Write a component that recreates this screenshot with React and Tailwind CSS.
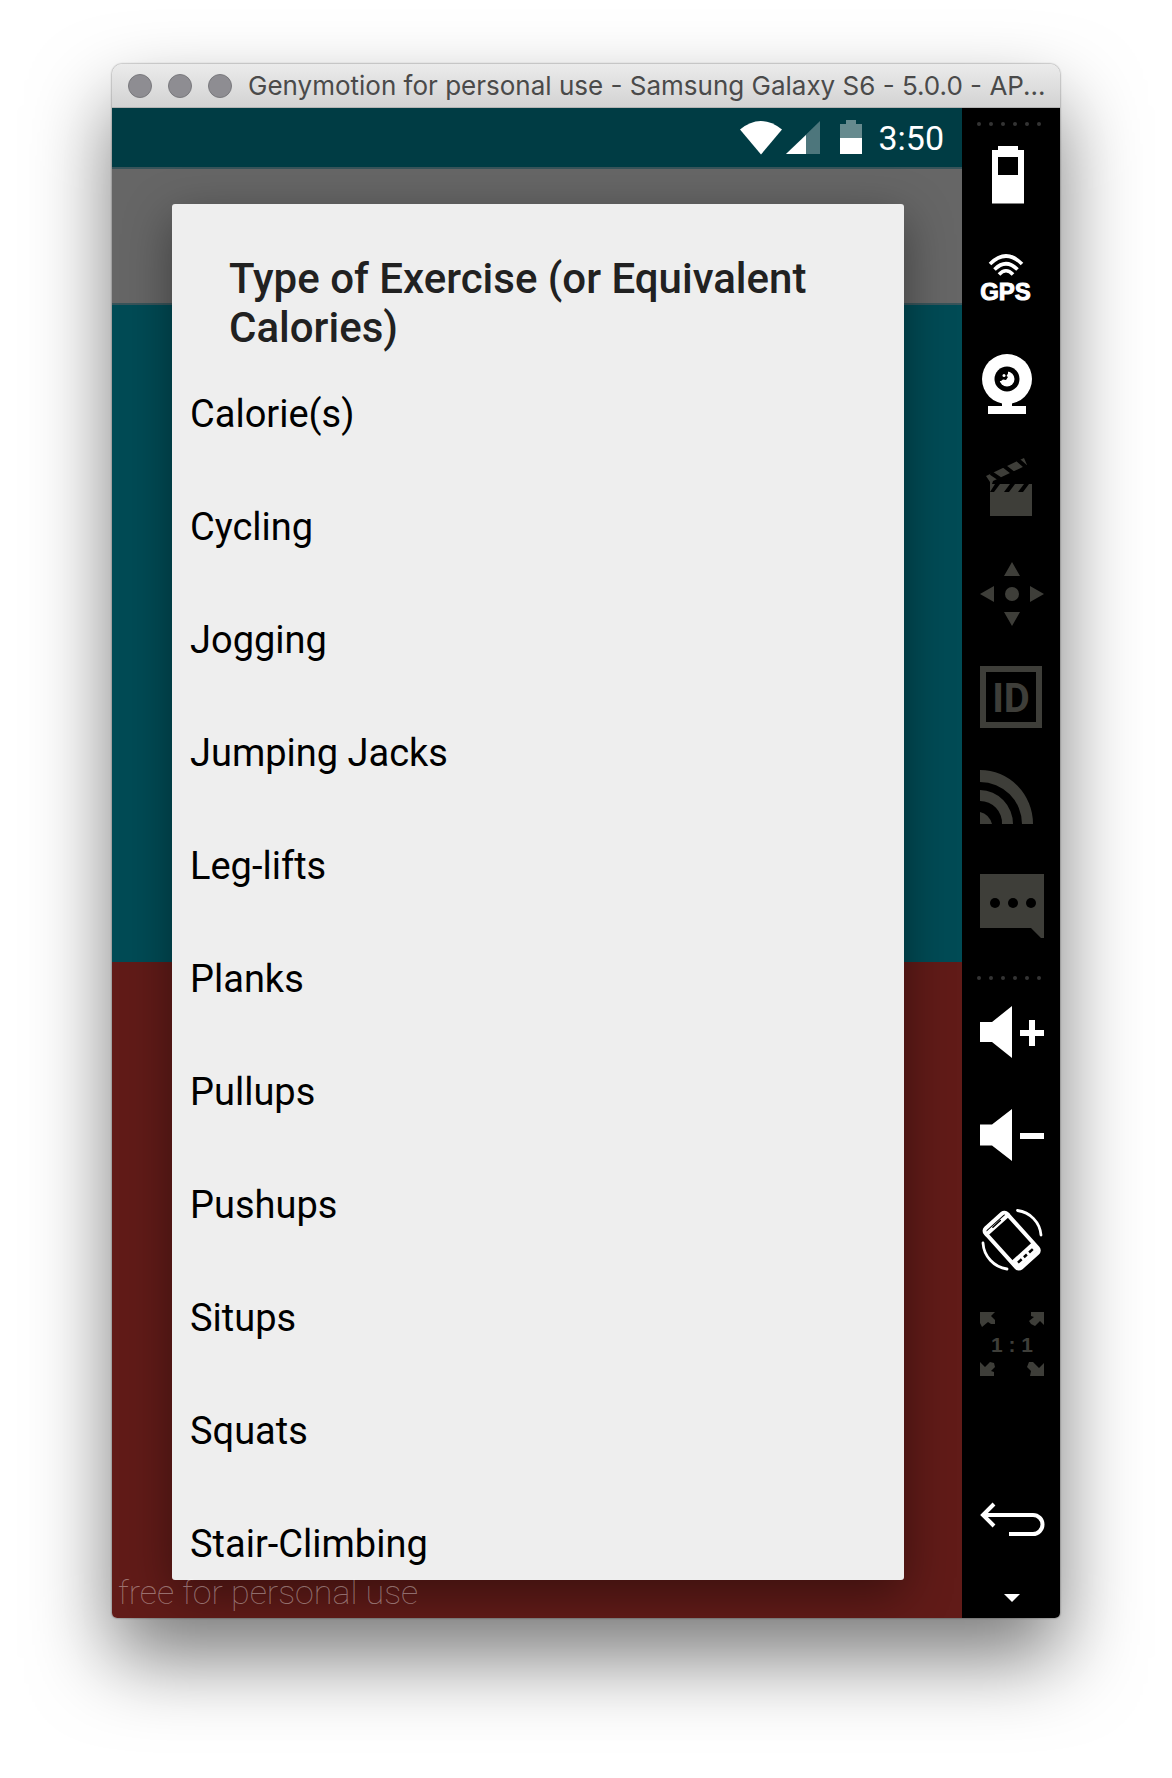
import React from "react";

const exercises = [
  "Calorie(s)",
  "Cycling",
  "Jogging",
  "Jumping Jacks",
  "Leg-lifts",
  "Planks",
  "Pullups",
  "Pushups",
  "Situps",
  "Squats",
  "Stair-Climbing",
];

function ToolButton({ label, children, dim = false, height = 104 }) {
  return (
    <button
      type="button"
      aria-label={label}
      className={dim ? "block text-[#3e3e39]" : "block text-white"}
    >
      <svg width="98" height={height} viewBox={`0 0 98 ${height}`} fill="currentColor" className="block">
        {children}
      </svg>
    </button>
  );
}

function Dots() {
  return (
    <div className="flex justify-center gap-2 pr-1">
      {[0, 1, 2, 3, 4, 5].map((i) => (
        <span key={i} className="size-1 rounded-full bg-[#343434]" />
      ))}
    </div>
  );
}

function TitleBar() {
  return (
    <header className="flex h-11 items-center rounded-t-[10px] border-b border-[#b4b4b4] bg-linear-to-b from-[#ebebeb] to-[#d3d3d3] px-4">
      <div className="flex shrink-0 gap-4">
        {["Close", "Minimize", "Zoom"].map((name) => (
          <button
            key={name}
            type="button"
            aria-label={name}
            className="size-6 rounded-full border border-[#79797d] bg-[#8e8d92]"
          />
        ))}
      </div>
      <h1 className="ml-4 whitespace-nowrap font-['Inter',sans-serif] text-[26px] leading-8 text-[#4a4a4a]">
        Genymotion for personal use - Samsung Galaxy S6 - 5.0.0 - AP...
      </h1>
    </header>
  );
}

function StatusBar() {
  return (
    <div className="flex h-[59px] items-center justify-end bg-[#003c44] pr-[18px] text-white">
      <svg width="122" height="36" viewBox="0 0 122 36" fill="currentColor" aria-label="Wi-Fi, signal and battery">
        <path d="M0 9.500Q20.500 -7.500 42 9.500L21 34.500Z" />
        <path d="M80 1V34H46Z" opacity=".3" />
        <path d="M66 15V34H46Z" />
        <path d="M106 0h10v4h6v14h-22V4h6Z" opacity=".4" />
        <path d="M100 18h22v16h-22Z" />
      </svg>
      <time className="ml-4 text-[34px] leading-9">3:50</time>
    </div>
  );
}

function ExerciseDialog() {
  return (
    <section
      role="dialog"
      aria-labelledby="dialog-title"
      className="relative mt-[37px] mr-[58px] mb-[38px] ml-[60px] rounded-[3px] bg-[#eeeeee] pt-[50px] shadow-[0_14px_48px_rgba(0,0,0,0.4)]"
    >
      <h2 id="dialog-title" className="px-[57px] text-[42px] font-medium leading-[49px] text-[#212121]">
        Type of Exercise (or Equivalent Calories)
      </h2>
      <ul className="mt-[5px] h-[1223px] overflow-hidden">
        {exercises.map((name) => (
          <li key={name}>
            <button
              type="button"
              className="flex h-[113px] w-full items-center px-[18px] text-left text-[38px] leading-[44px] text-black"
            >
              {name}
            </button>
          </li>
        ))}
      </ul>
    </section>
  );
}

function Toolbar() {
  return (
    <aside className="flex w-[98px] shrink-0 flex-col bg-black">
      <div className="h-[18px] pt-3.5">
        <Dots />
      </div>
      <ToolButton label="Battery">
        <path fillRule="evenodd" d="M36 20h20v4h6v53.500H30V24h6ZM36 31v18h20V31Z" />
      </ToolButton>
      <ToolButton label="GPS">
        <g fill="none" stroke="currentColor" strokeWidth="3.600">
          <path d="M28 34Q44 18 60 34" />
          <path d="M32.500 39.500Q44 28 55.500 39.500" />
          <path d="M37 44.500Q44 37 51 44.500" />
        </g>
        <text
          x="43.500"
          y="70"
          textAnchor="middle"
          stroke="currentColor"
          strokeWidth="1"
          className="font-['Liberation_Sans',sans-serif] text-[24px] font-bold"
        >
          GPS
        </text>
      </ToolButton>
      <ToolButton label="Camera">
        <circle cx="45" cy="45" r="25" />
        <circle cx="45" cy="45" r="12.500" fill="#000" />
        <circle cx="45" cy="45" r="7.500" />
        <path d="M36 37h10v2.500l-1.500 2.500 1.500 1-2 3-3-.5-2 1.500h-3Z" fill="#000" />
        <circle cx="42" cy="41.500" r="1.500" />
        <path d="M26 72h14v-4h10v4h14v8H26Z" />
      </ToolButton>
      <ToolButton label="Video capture" dim>
        <path d="M24 38L62 20L65 27L31 43L30 46H70V78H28V44Z" />
        <path
          d="M29 35L38 41M42 28L51 35M56 22L64 29"
          fill="none"
          stroke="#000"
          strokeWidth="4"
        />
        <path d="M28 54L33 46H38L32 54ZM42 54L48 46H53L47 54ZM56 54L62 46H67L61 54Z" fill="#000" />
      </ToolButton>
      <ToolButton label="Directional pad" dim>
        <circle cx="50" cy="52" r="7" />
        <path d="M50 20l8 14H42ZM50 84l8-14H42ZM18 52l14-8v16ZM82 52l-14-8v16Z" />
      </ToolButton>
      <ToolButton label="Identifiers" dim>
        <path fillRule="evenodd" d="M18 20h62v62H18ZM24 26v50h50V26Z" />
        <text x="49" y="66" textAnchor="middle" className="text-[40px] font-bold">
          ID
        </text>
      </ToolButton>
      <ToolButton label="Network" dim>
        <path d="M18 62Q27 64 30 74H18Z" />
        <path d="M18 40A34 34 0 0 1 51 74H40A22 22 0 0 0 18 51Z" />
        <path d="M18 20A53 54 0 0 1 71 74H60A42 42 0 0 0 18 32Z" />
      </ToolButton>
      <ToolButton label="Messages" dim>
        <path d="M18 20H82V84H79L69 74H18Z" />
        <g fill="#000">
          <circle cx="33" cy="49" r="5" />
          <circle cx="51" cy="49" r="5" />
          <circle cx="69" cy="49" r="5" />
        </g>
      </ToolButton>
      <div className="h-[26px] pt-[18px]">
        <Dots />
      </div>
      <ToolButton label="Volume up">
        <path d="M18 38H30L50 22V74L30 58H18Z" />
        <path d="M67 36h6v10h9v6h-9v10h-6V52h-9v-6h9Z" />
      </ToolButton>
      <ToolButton label="Volume down">
        <path d="M18 36.500H30L50 21V73L30 57.500H18Z" />
        <path d="M58 45h24v6H58Z" />
      </ToolButton>
      <ToolButton label="Rotate">
        <g fill="none" stroke="currentColor" strokeLinecap="round">
          <g transform="rotate(-42 50 49)">
            <rect x="35.500" y="22" width="29" height="53" rx="3.500" strokeWidth="4" />
            <path d="M35.500 27H64.500" strokeWidth="4" />
            <path d="M35.500 68.500H64.500" strokeWidth="10" strokeLinecap="butt" />
            <path d="M45 26h10" stroke="#000" strokeWidth="1.500" />
            <path d="M40 69h5M48 69h4M55 69h5" stroke="#000" strokeWidth="2.500" strokeLinecap="butt" />
          </g>
          <path d="M55.500 18.500A27 27 0 0 1 79 43M21 51A28 28 0 0 0 45 77" strokeWidth="2.800" />
        </g>
      </ToolButton>
      <ToolButton label="Actual size" dim>
        <path d="M18 16h15l-4 4 4 4v4h-4l-3-2-6 5-2-4Z" />
        <path d="M82 16H69v4l3 1-5 4 2 3 4 2 5-5 4 4Z" />
        <path d="M18 80h14v-4l-3-1 4-4-1-4-4-1-5 5-5-5Z" />
        <path d="M82 80H68l1-5-4-4 2-5h4l6 6 5-5Z" />
        <text
          x="50"
          y="56"
          textAnchor="middle"
          className="font-['Liberation_Sans',sans-serif] text-[21px] font-bold"
        >
          1 : 1
        </text>
      </ToolButton>
      <div className="mt-auto">
        <ToolButton label="Back" height={80}>
          <path
            d="M32 14L21 25L32 36M21 25H71A9 9 0 0 1 71 44H47"
            fill="none"
            stroke="currentColor"
            strokeWidth="4"
          />
        </ToolButton>
      </div>
      <ToolButton label="More" height={48}>
        <path d="M42 24h16l-8 8Z" />
      </ToolButton>
    </aside>
  );
}

export default function App() {
  return (
    <div className="bg-white px-28 pt-16 pb-40 font-['Roboto',sans-serif]">
      <main className="rounded-t-[10px] rounded-b-[5px] shadow-[0_0_2px_rgba(0,0,0,0.6),0_40px_80px_rgba(0,0,0,0.52)]">
        <TitleBar />
        <div className="flex overflow-hidden rounded-b-[5px]">
          <div className="min-w-0 flex-1">
            <StatusBar />
            <div className="relative flow-root overflow-hidden">
              <div className="absolute inset-0 flex flex-col">
                <div className="h-[138px] border-y-2 border-[#38545a] bg-[#666666]" />
                <div className="flex-1 bg-[#004b55]" />
                <div className="flex-1 bg-[#611b18]" />
              </div>
              <ExerciseDialog />
              <p className="absolute bottom-1 left-[6px] text-[34px] font-thin leading-[44px] text-white/40">
                free for personal use
              </p>
            </div>
          </div>
          <Toolbar />
        </div>
      </main>
    </div>
  );
}
